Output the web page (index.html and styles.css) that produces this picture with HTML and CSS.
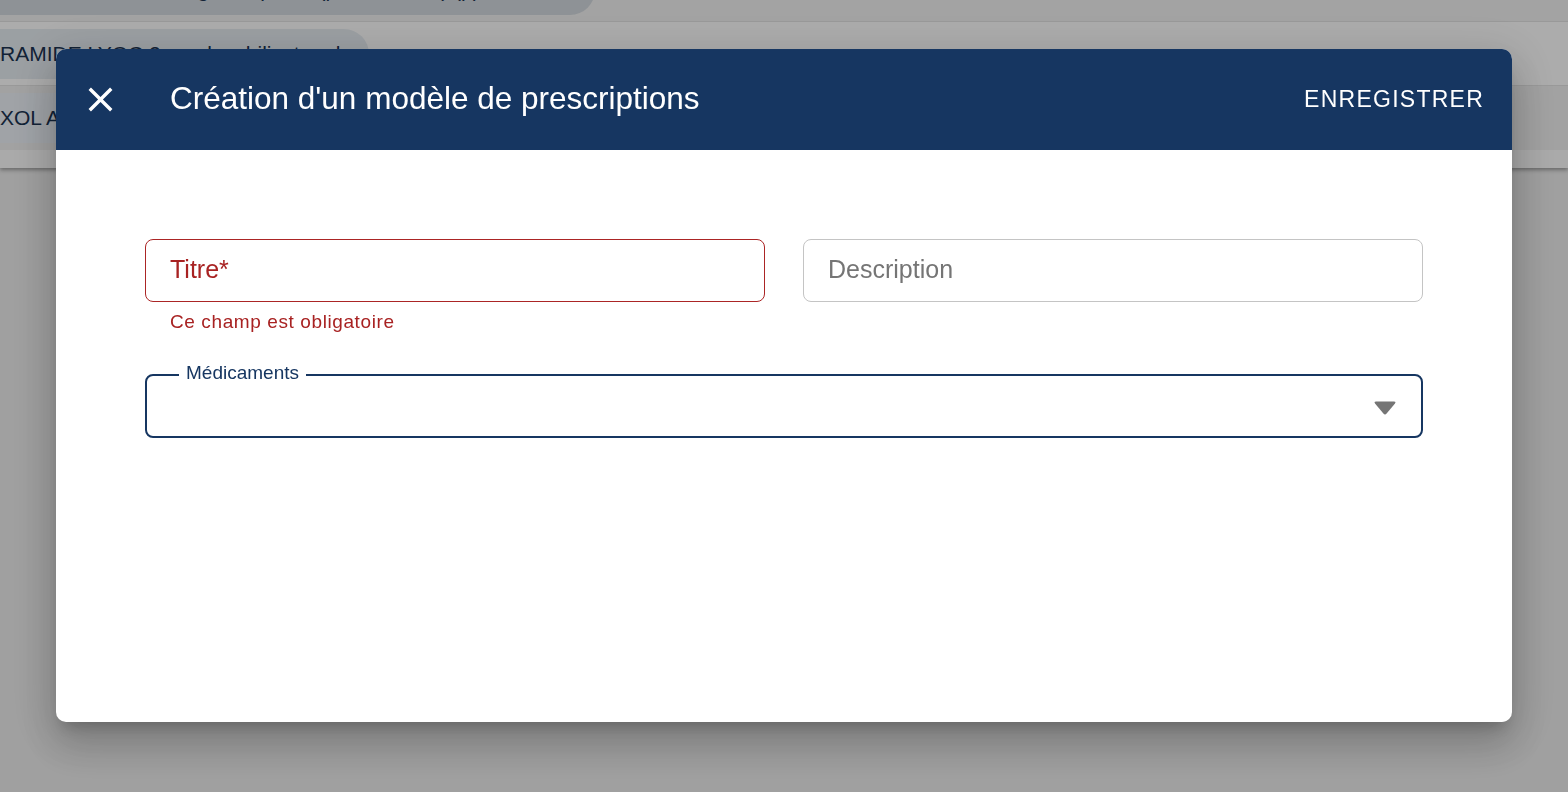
FILE: index.html
```html
<!DOCTYPE html>
<html lang="fr">
<head>
<meta charset="utf-8">
<title>Création d'un modèle de prescriptions</title>
<link rel="stylesheet" href="styles.css">
</head>
<body>
<div class="page">
  <div class="list">
    <div class="row row-first">
      <span class="chip chip-hover">DOLIPRANE 1000 mg, comprimé (paracétamol) (p)</span>
    </div>
    <div class="row row-light">
      <span class="chip">RAMIDE LYOC 2 mg, lyophilisat oral</span>
    </div>
    <div class="row row-mid">
      <span class="chip">XOL ADULTES</span>
    </div>
    <div class="list-foot"></div>
  </div>
</div>

<div class="backdrop">
  <div class="dialog" role="dialog">
    <header class="dialog-bar">
      <button class="icon-btn" aria-label="Fermer">
        <svg viewBox="0 0 24 24" width="41" height="41"><path fill="#fff" d="M19 6.41 17.59 5 12 10.59 6.41 5 5 6.41 10.59 12 5 17.59 6.41 19 12 13.41 17.59 19 19 17.59 13.41 12z"/></svg>
      </button>
      <h2 class="dialog-title">Création d'un modèle de prescriptions</h2>
      <button class="save-btn">ENREGISTRER</button>
    </header>
    <div class="dialog-body">
      <div class="fields-row">
        <div class="field">
          <div class="input input-error">Titre*</div>
          <p class="helper">Ce champ est obligatoire</p>
        </div>
        <div class="field">
          <div class="input">Description</div>
        </div>
      </div>
      <div class="select">
        <span class="select-label">Médicaments</span>
        <svg class="arrow" viewBox="0 0 24 14" width="24" height="14"><path fill="#757575" d="M3.2 0.5H20.8Q23.6 0.5 21.8 2.7L13.6 12.6Q12 14.4 10.4 12.6L2.2 2.7Q0.4 0.5 3.2 0.5Z"/></svg>
      </div>
    </div>
  </div>
</div>
</body>
</html>
```

FILE: styles.css
```css
* { box-sizing: border-box; }

html, body {
  margin: 0;
  height: 100%;
}

body {
  font-family: "Liberation Sans", Arial, sans-serif;
  background: #e5e5e5;
  overflow: hidden;
}

/* underlying page */
.page {
  height: 100%;
}

.list {
  background: #f4f4f4;
  box-shadow: 0 2px 4px rgba(0, 0, 0, 0.35);
}

.row {
  display: flex;
  align-items: center;
  overflow: hidden;
  border-bottom: 1px solid #dcdcdc;
}

.row-first {
  height: 22px;
  background: #eaeaea;
  align-items: flex-start;
}

.row-light {
  height: 64px;
  background: #f7f7f7;
}

.row-mid {
  height: 64px;
  background: #e8e8e8;
  border-bottom: none;
}

.chip {
  display: inline-flex;
  align-items: center;
  height: 50px;
  padding: 0 29px 0 0;
  border-radius: 0 25px 25px 0;
  background: #dfe5ea;
  color: #1a314e;
  font-size: 21px;
  white-space: nowrap;
  flex: none;
}

.chip-hover {
  width: 595px;
  margin-top: -35px;
  background: #ccd2d7;
  overflow: hidden;
}

.row-mid .chip {
  background: #e5eaf0;
}

.list-foot {
  height: 18px;
  background: #f4f4f4;
}

/* modal */
.backdrop {
  position: fixed;
  inset: 0;
  background: rgba(0, 0, 0, 0.3);
  display: flex;
  justify-content: center;
  align-items: flex-start;
  padding-top: 49px;
}

.dialog {
  width: 1456px;
  height: 673px;
  background: #fff;
  border-radius: 10px;
  overflow: hidden;
  display: flex;
  flex-direction: column;
  box-shadow: 0 11px 15px -7px rgba(0, 0, 0, 0.2), 0 24px 38px 3px rgba(0, 0, 0, 0.14), 0 9px 46px 8px rgba(0, 0, 0, 0.12);
}

.dialog-bar {
  height: 101px;
  flex: none;
  background: #163661;
  display: flex;
  align-items: center;
  padding: 0 28px 0 24px;
  color: #fff;
}

.icon-btn {
  border: 0;
  background: none;
  padding: 0;
  width: 41px;
  height: 41px;
  display: flex;
  cursor: pointer;
}

.dialog-title {
  margin: 0 0 3px 49px;
  font-size: 31.5px;
  font-weight: 400;
  flex: 1;
  white-space: nowrap;
}

.save-btn {
  border: 0;
  background: none;
  padding: 0;
  color: #fff;
  font-family: inherit;
  font-size: 23px;
  letter-spacing: 1.25px;
  cursor: pointer;
}

.dialog-body {
  padding: 89px 89px 0;
}

.fields-row {
  display: grid;
  grid-template-columns: 1fr 1fr;
  column-gap: 38px;
  align-items: start;
}

.input {
  height: 63px;
  border: 1px solid #c4c4c4;
  border-radius: 8px;
  display: flex;
  align-items: center;
  padding: 0 24px 3px;
  font-size: 25px;
  color: #757575;
}

.input-error {
  border-color: #ab2525;
  color: #a82222;
}

.helper {
  margin: 4px 0 0 25px;
  font-size: 19px;
  line-height: 31px;
  letter-spacing: 0.6px;
  color: #a82222;
}

.select {
  position: relative;
  margin-top: 37px;
  height: 64px;
  border: 2px solid #163661;
  border-radius: 8px;
  display: flex;
  align-items: center;
  justify-content: flex-end;
  padding: 4px 24px 0 0;
}

.select-label {
  position: absolute;
  top: -13px;
  left: 32px;
  padding: 0 7px;
  background: #fff;
  color: #163661;
  font-size: 19px;
  line-height: 19px;
}

.arrow {
  display: block;
}
```
